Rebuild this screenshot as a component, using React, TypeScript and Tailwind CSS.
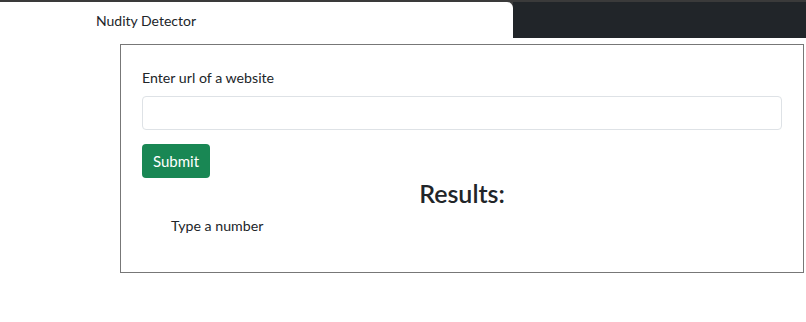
import React from "react";

export default function App() {
  return (
    <div className="w-[806px] h-[322px] bg-white overflow-hidden" style={{ fontFamily: 'Lato, "Open Sans", sans-serif' }}>
      <div className="h-[2px] bg-[#3a3a3a]" />
      <div className="flex h-[36px] bg-[#3a3a3a]">
        <div className="w-[513px] bg-white rounded-tr-[6px] flex items-center pl-[96px] text-[14px] text-[#212529]">
          Nudity Detector
        </div>
        <div className="flex-1 bg-[#212529]" />
      </div>
      <div className="ml-[120px] mr-[2px] mt-[6px] h-[229px] border border-[#777] px-[21px] pt-[23px] text-[#212529]">
        <label className="block text-[14.2px] leading-[20px] mb-[8px]">Enter url of a website</label>
        <input className="block w-full h-[34px] border border-[#dee2e6] rounded-[4px] outline-none" />
        <button className="mt-[14px] h-[34px] w-[68px] bg-[#198754] text-white rounded-[4px] text-[15px]">
          Submit
        </button>
        <h2 className="text-center text-[25px] font-semibold leading-[28px] mt-[1px]">
          Results:
        </h2>
        <div className="pl-[29px] mt-[9px] text-[14.2px] leading-[20px]">Type a number</div>
      </div>
    </div>
  );
}
